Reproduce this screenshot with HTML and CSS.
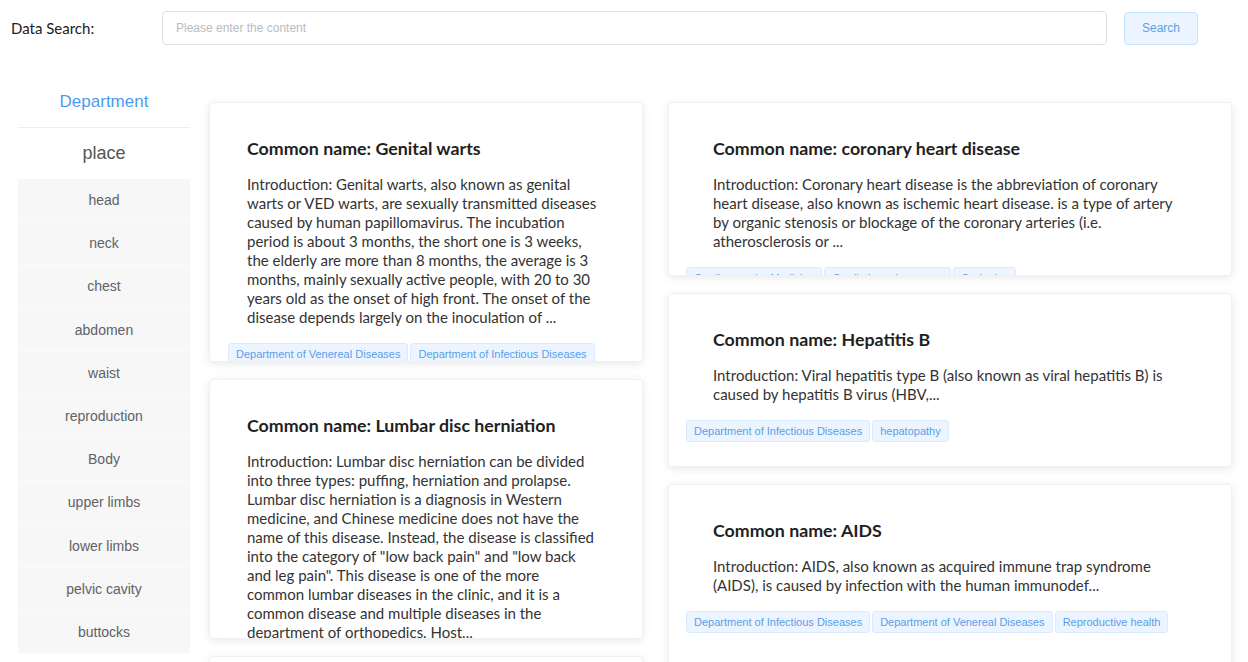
FILE: index.html
```html
<!DOCTYPE html>
<html lang="en">
<head>
  <meta charset="UTF-8" />
  <meta name="viewport" content="width=device-width, initial-scale=1.0"/>
  <title>Data Search</title>
  <link rel="stylesheet" href="styles.css">
</head>
<body>

  <!-- Search Bar -->
  <div class="search-bar">
    <span class="search-label">Data Search:</span>
    <input class="search-input" type="text" placeholder="Please enter the content">
    <button class="search-btn">Search</button>
  </div>

  <div class="content">

    <!-- Sidebar -->
    <div class="sidebar">
      <div class="sidebar-title">Department</div>
      <div class="sidebar-sub">place</div>
      <ul class="part-list">
        <li>head</li>
        <li>neck</li>
        <li>chest</li>
        <li>abdomen</li>
        <li>waist</li>
        <li>reproduction</li>
        <li>Body</li>
        <li>upper limbs</li>
        <li>lower limbs</li>
        <li>pelvic cavity</li>
        <li>buttocks</li>
      </ul>
    </div>

    <!-- Cards -->
    <div class="cards">
      <div class="col col-left">
        <div class="card">
          <div class="card-body">
            <h3>Common name: Genital warts</h3>
            <p>Introduction: Genital warts, also known as genital warts or VED warts, are sexually transmitted diseases caused by human papillomavirus. The incubation period is about 3 months, the short one is 3 weeks, the elderly are more than 8 months, the average is 3 months, mainly sexually active people, with 20 to 30 years old as the onset of high front. The onset of the disease depends largely on the inoculation of ...</p>
          </div>
          <div class="tags">
            <span class="tag">Department of Venereal Diseases</span>
            <span class="tag">Department of Infectious Diseases</span>
          </div>
        </div>
        <div class="card">
          <div class="card-body">
            <h3>Common name: Lumbar disc herniation</h3>
            <p>Introduction: Lumbar disc herniation can be divided into three types: puffing, herniation and prolapse. Lumbar disc herniation is a diagnosis in Western medicine, and Chinese medicine does not have the name of this disease. Instead, the disease is classified into the category of "low back pain" and "low back and leg pain". This disease is one of the more common lumbar diseases in the clinic, and it is a common disease and multiple diseases in the department of orthopedics. Host...</p>
          </div>
          <div class="tags">
            <span class="tag">Department of Orthopedics</span>
          </div>
        </div>
        <div class="card"></div>
      </div>

      <div class="col col-right">
        <div class="card">
          <div class="card-body">
            <h3>Common name: coronary heart disease</h3>
            <p>Introduction: Coronary heart disease is the abbreviation of coronary heart disease, also known as ischemic heart disease. is a type of artery by organic stenosis or blockage of the coronary arteries (i.e. atherosclerosis or ...</p>
          </div>
          <div class="tags">
            <span class="tag">Cardiovascular Medicine</span>
            <span class="tag">Cardiothoracic surgery</span>
            <span class="tag">Geriatrics</span>
          </div>
        </div>
        <div class="card">
          <div class="card-body">
            <h3>Common name: Hepatitis B</h3>
            <p>Introduction: Viral hepatitis type B (also known as viral hepatitis B) is caused by hepatitis B virus (HBV,...</p>
          </div>
          <div class="tags">
            <span class="tag">Department of Infectious Diseases</span>
            <span class="tag">hepatopathy</span>
          </div>
        </div>
        <div class="card card-long">
          <div class="card-body">
            <h3>Common name: AIDS</h3>
            <p>Introduction: AIDS, also known as acquired immune trap syndrome (AIDS), is caused by infection with the human immunodef...</p>
          </div>
          <div class="tags">
            <span class="tag">Department of Infectious Diseases</span>
            <span class="tag">Department of Venereal Diseases</span>
            <span class="tag">Reproductive health</span>
          </div>
        </div>
      </div>
    </div>

  </div>

</body>
</html>
```

FILE: styles.css
```css
body {
  font-family: "Liberation Sans", Arial, sans-serif;
  background-color: #fff;
  color: #333;
  margin: 0;
  padding: 0;
  overflow: hidden;
}

/* search bar */
.search-bar {
  display: flex;
  align-items: center;
  padding: 11px 0 0 11px;
}

.search-label {
  width: 151px;
  font-family: "Lato", sans-serif;
  font-size: 15px;
  color: #222;
}

.search-input {
  width: 945px;
  height: 34px;
  box-sizing: border-box;
  border: 1px solid #dcdfe6;
  border-radius: 4px;
  padding: 0 13px;
  font-family: "Liberation Sans", Arial, sans-serif;
  font-size: 12px;
  color: #606266;
  outline: none;
}

.search-input::placeholder {
  color: #b8bcc4;
}

.search-btn {
  margin-left: 17px;
  width: 74px;
  height: 33px;
  background-color: #ecf5ff;
  border: 1px solid #c6e2ff;
  border-radius: 4px;
  color: #5a9ee8;
  font-family: "Liberation Sans", Arial, sans-serif;
  font-size: 12px;
  cursor: pointer;
}

/* layout */
.content {
  display: flex;
  align-items: flex-start;
  margin-top: 32px;
}

.sidebar {
  width: 172px;
  margin-left: 18px;
  flex-shrink: 0;
}

.sidebar-title {
  height: 50px;
  line-height: 50px;
  text-align: center;
  color: #4a9cf0;
  font-size: 17px;
  border-bottom: 1px solid #eeeeee;
}

.sidebar-sub {
  height: 51px;
  line-height: 51px;
  text-align: center;
  color: #555;
  font-size: 18px;
}

.part-list {
  list-style: none;
  margin: 0;
  padding: 0;
  background-color: #f7f7f7;
}

.part-list li {
  height: 42.2px;
  line-height: 42.2px;
  text-align: center;
  font-size: 14px;
  color: #606266;
  border-bottom: 1px solid #fbfbfb;
}

/* cards */
.cards {
  display: flex;
  gap: 25px;
  margin-left: 19px;
  padding-top: 25px;
}

.col {
  display: flex;
  flex-direction: column;
  gap: 17px;
}

.col-left {
  width: 434px;
}

.col-right {
  width: 564px;
}

.card {
  background-color: #fff;
  border: 1px solid #f0f0f0;
  border-radius: 4px;
  box-shadow: 0 2px 10px rgba(0, 0, 0, 0.09);
  overflow: hidden;
  box-sizing: border-box;
  flex-shrink: 0;
}

.col-left .card {
  height: 260px;
  padding: 0 0 0 18px;
}

.col-right .card {
  height: 174px;
  padding: 0 0 0 17px;
}

.col-right .card-long {
  height: 210px;
}

.card-body {
  padding: 34px 44px 0 19px;
  font-family: "Lato", sans-serif;
}

.col-right .card-body {
  padding: 34px 50px 0 27px;
}

.card-body h3 {
  margin: 0;
  font-size: 17.8px;
  line-height: 22px;
  font-weight: bold;
  color: #1f1f1f;
}

.card-body p {
  margin: 16px 0 0;
  font-size: 15px;
  line-height: 19px;
  color: #333;
}

.tags {
  display: flex;
  gap: 2px;
  margin-top: 16px;
}

.tag {
  height: 20px;
  line-height: 20px;
  padding: 0 7px;
  background-color: #ecf5ff;
  border: 1px solid #d9ecff;
  border-radius: 3px;
  color: #5a9ee8;
  font-size: 11px;
  white-space: nowrap;
}
```
